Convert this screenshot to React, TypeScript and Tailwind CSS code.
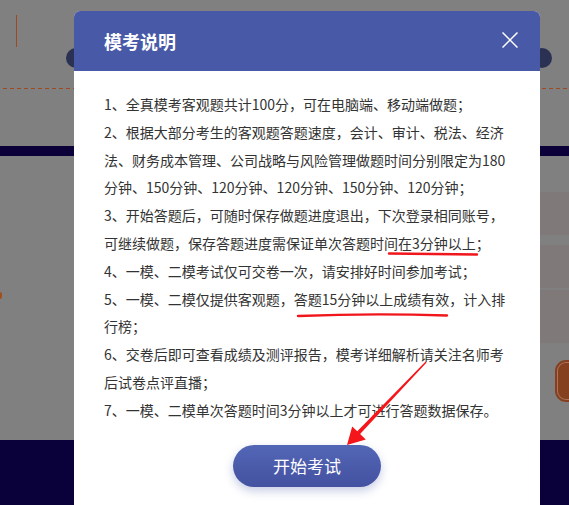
const items: Array<React.ReactNode> = [
  '1、全真模考客观题共计100分，可在电脑端、移动端做题；',
  '2、根据大部分考生的客观题答题速度，会计、审计、税法、经济法、财务成本管理、公司战略与风险管理做题时间分别限定为180分钟、150分钟、120分钟、120分钟、150分钟、120分钟；',
  '3、开始答题后，可随时保存做题进度退出，下次登录相同账号，可继续做题，保存答题进度需保证单次答题时间在3分钟以上；',
  '4、一模、二模考试仅可交卷一次，请安排好时间参加考试；',
  '5、一模、二模仅提供客观题，答题15分钟以上成绩有效，计入排行榜；',
  '6、交卷后即可查看成绩及测评报告，模考详细解析请关注名师考后试卷点评直播；',
  '7、一模、二模单次答题时间3分钟以上才可进行答题数据保存。',
]

function PageBehind() {
  return (
    <div className="flex h-full flex-col">
      {/* top area */}
      <div className="h-[146px] pt-[15px]">
        <div className="ml-[16px] h-[32px] w-px bg-[#9d4a22]" />
        <div className="mt-px flex h-[20px] justify-between pl-[66px] pr-[17px]">
          <div className="h-[20px] w-[20px] rounded-full bg-[#2a3152]" />
          <div className="h-[20px] w-[20px] rounded-full bg-[#2a3152]" />
        </div>
        <div className="ml-[3px] mt-[20px] h-px bg-[repeating-linear-gradient(90deg,#9d4a22_0_4px,transparent_4px_7px)]" />
      </div>
      <div className="h-[10px] bg-[#0c0039]" />
      {/* middle area */}
      <div className="flex h-[284px] justify-between">
        <div className="mt-[136px] h-[7px] w-[2px] rounded-r-full bg-[#a0501f]" />
        <div className="flex w-[29px] flex-col pt-[36px]">
          <div className="h-[43px] bg-[#7f7a79]" />
          <div className="mt-[10px] h-[43px] bg-[#7f7a79]" />
          <div className="mt-[2px] h-[53px] bg-[#7f7a79]" />
          <div className="ml-[17px] mt-[19px] h-[38px] rounded-l-[9px] border border-r-0 border-[#b0725a] bg-[#85401f] outline-2 outline-[#85401f]" />
        </div>
      </div>
      <div className="flex-1 bg-[#0a003a]" />
    </div>
  )
}

export default function App() {
  return (
    <div
      className="relative h-[505px] w-[569px] overflow-hidden bg-[#808080]"
      style={{ fontFamily: '"Noto Sans CJK SC", "Microsoft YaHei", sans-serif' }}
    >
      <PageBehind />

      <div className="absolute left-[74px] top-[11px] flex h-[494px] w-[466px] flex-col overflow-hidden rounded-t-[6px] bg-white">
        <div className="flex h-[60px] shrink-0 items-center justify-between bg-[#4859a7] pl-[30px] pr-[22px]">
          <h2 className="text-[18px] font-bold leading-none text-white">模考说明</h2>
          <svg width="16" height="16" viewBox="0 0 16 16" className="-mt-[2px]">
            <path d="M0.5 0.5 L15.5 15.5 M15.5 0.5 L0.5 15.5" stroke="white" strokeWidth="1.5" />
          </svg>
        </div>
        <div className="px-[30px] pt-[20px] text-[14px] leading-[27.8px] text-[#333333]">
          {items.map((item, i) => (
            <p key={i}>{item}</p>
          ))}
        </div>
        <div className="mt-[20px] flex justify-center">
          <button className="h-[42px] w-[148px] rounded-full bg-gradient-to-b from-[#5366b6] to-[#4351a0] text-[17px] text-white shadow-[0_4px_10px_rgba(72,89,167,0.3)]">
            开始考试
          </button>
        </div>
      </div>

      {/* red annotations */}
      <svg className="pointer-events-none absolute inset-0" width="569" height="505" viewBox="0 0 569 505">
        <path d="M389 253.5 Q433 254 477 254.5" stroke="#f0161b" strokeWidth="2.4" fill="none" strokeLinecap="round" />
        <path d="M298 316 Q372 313 447 315.5" stroke="#f0161b" strokeWidth="2.4" fill="none" strokeLinecap="round" />
        <polygon
          points="426.6,362.6 360.1,434.1 365.8,439.4 347,445 352.2,426.5 357.3,431.3 425.6,361.6"
          fill="#f5161b"
        />
      </svg>
    </div>
  )
}
